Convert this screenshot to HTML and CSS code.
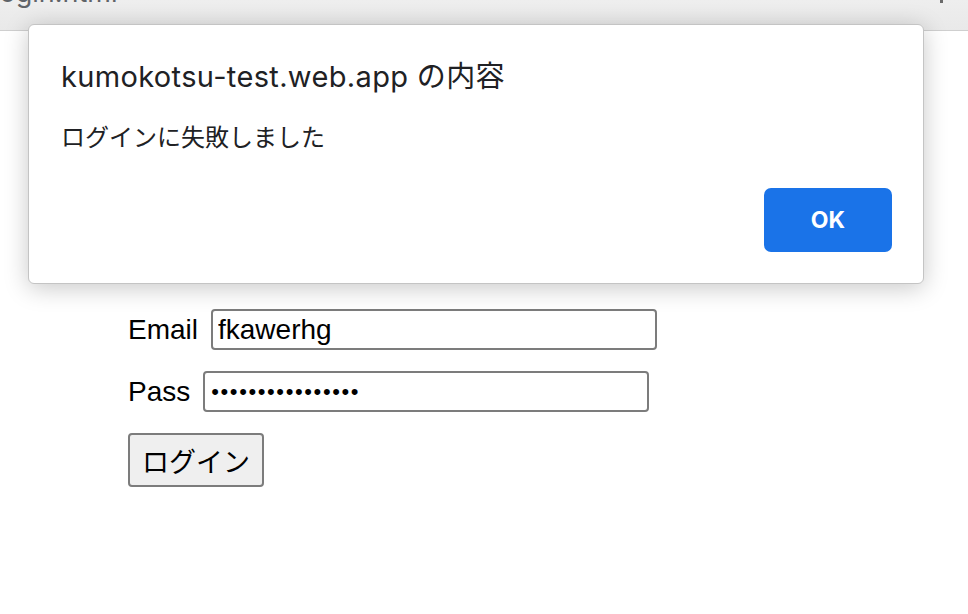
FILE: index.html
```html
<!DOCTYPE html>
<html lang="ja">
<head>
<meta charset="utf-8">
<title>login.html</title>
<link rel="stylesheet" href="styles.css">
</head>
<body>
<header class="tabbar">
  <span class="tab-title">login.html</span>
  <span class="tab-mark"></span>
</header>
<main class="page">
  <form class="login">
    <div class="row">
      <label class="label" for="email">Email</label>
      <input class="field" id="email" type="text" value="fkawerhg">
    </div>
    <div class="row">
      <label class="label" for="pass">Pass</label>
      <input class="field" id="pass" type="password" value="abcdefghijklmnop">
    </div>
    <button class="submit" type="button">ログイン</button>
  </form>
</main>
<div class="dialog" role="alertdialog">
  <h1 class="dialog-title">kumokotsu-test.web.app の内容</h1>
  <p class="dialog-msg">ログインに失敗しました</p>
  <div class="dialog-actions">
    <button class="ok" type="button">OK</button>
  </div>
</div>
</body>
</html>
```

FILE: styles.css
```css
html, body {
  margin: 0;
  padding: 0;
  background: #ffffff;
}

body {
  font-family: "Liberation Sans", Arial, "Noto Sans CJK JP", sans-serif;
  color: #000;
  width: 968px;
  height: 614px;
  overflow: hidden;
}

.tabbar {
  height: 30px;
  background: linear-gradient(#eeeeee, #e9e9e9);
  border-bottom: 1px solid #cfcfcf;
  display: flex;
  justify-content: space-between;
  overflow: hidden;
}

.tab-title {
  font-family: Inter, "Liberation Sans", sans-serif;
  font-size: 27px;
  line-height: 27px;
  color: #5f6368;
  margin-top: -21px;
  margin-left: -7px;
}

.tab-mark {
  width: 3px;
  height: 3px;
  background: #6a6a6a;
  margin-right: 25px;
}

.page {
  padding: 278px 0 0 128px;
}

.login {
  display: flex;
  flex-direction: column;
  align-items: flex-start;
  gap: 21px;
}

.row {
  display: flex;
  align-items: center;
  gap: 13px;
  height: 41px;
}

.label {
  font-size: 28px;
  line-height: 32px;
}

.field {
  box-sizing: border-box;
  width: 446px;
  height: 41px;
  border: 2px solid #7c7c7c;
  border-radius: 4px;
  padding: 0 5px;
  font-family: "Liberation Sans", Arial, sans-serif;
  font-size: 28px;
  color: #000;
  background: #fff;
  outline: none;
}

#pass {
  font-size: 22px;
  letter-spacing: 1.6px;
  padding-left: 6px;
}

.submit {
  box-sizing: border-box;
  height: 54px;
  width: 136px;
  padding: 0;
  border: 2px solid #7c7c7c;
  border-radius: 4px;
  background: #efefef;
  font-family: "Noto Sans CJK JP", sans-serif;
  font-size: 27px;
  color: #000;
}

.dialog {
  position: absolute;
  left: 28px;
  top: 24px;
  width: 896px;
  height: 260px;
  box-sizing: border-box;
  background: #fff;
  border: 1px solid #c4c4c4;
  border-radius: 6px;
  box-shadow: 0 4px 24px rgba(0, 0, 0, 0.22);
  padding: 34px 31px 31px 32px;
  display: flex;
  flex-direction: column;
}

.dialog-title {
  margin: 0;
  font-family: Inter, "Liberation Sans", "Noto Sans CJK JP", sans-serif;
  font-weight: 400;
  font-size: 29px;
  letter-spacing: 0.35px;
  line-height: 36px;
  color: #202124;
}

.dialog-msg {
  margin: 29px 0 0;
  font-family: "Noto Sans CJK JP", sans-serif;
  font-size: 24px;
  line-height: 24px;
  color: #202124;
}

.dialog-actions {
  margin-top: auto;
  display: flex;
  justify-content: flex-end;
}

.ok {
  width: 128px;
  height: 64px;
  border: none;
  border-radius: 7px;
  background: #1a73e8;
  color: #fff;
  font-family: Inter, "Liberation Sans", sans-serif;
  font-weight: 700;
  font-size: 23px;
}
```
